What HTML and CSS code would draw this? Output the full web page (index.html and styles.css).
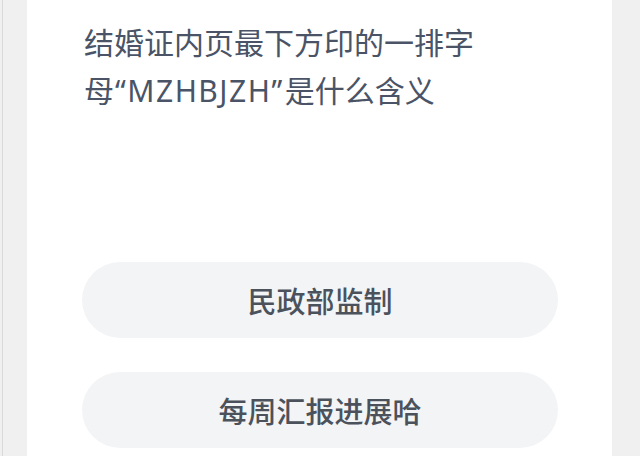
FILE: index.html
```html
<!DOCTYPE html>
<html lang="zh-CN">
<head>
  <meta charset="UTF-8">
  <meta name="viewport" content="width=device-width, initial-scale=1.0">
  <title>答题</title>
  <link rel="stylesheet" href="styles.css">
</head>
<body>
  <div class="page">
    <!-- 题目卡片 -->
    <div class="card">
      <h1 class="question">结婚证内页最下方印的一排字<br>母<span class="latin">“MZHBJZH”</span>是什么含义</h1>
      <div class="options">
        <button class="option">民政部监制</button>
        <button class="option">每周汇报进展哈</button>
      </div>
    </div>
  </div>
</body>
</html>
```

FILE: styles.css
```css
html, body {
  margin: 0;
  height: 100%;
}
body {
  font-family: "Noto Sans CJK SC", "Noto Sans", sans-serif;
  background: #f0f0f0;
  overflow: hidden;
}
.page {
  height: 100%;
  margin-left: 2px;
  border-left: 1px solid #d9d9d9;
  padding: 0 28px 0 24px;
}
.card {
  background: #ffffff;
  height: 100%;
  padding: 17px 54px 0 55px;
  box-sizing: border-box;
}
.question {
  margin: 0 0 0 2px;
  height: 96px;
  font-size: 30px;
  font-weight: normal;
  line-height: 48px;
  color: #4a5466;
}
.latin {
  font-family: "Noto Sans", sans-serif;
  letter-spacing: 1.5px;
  padding: 0 1px;
}
.options {
  display: flex;
  flex-direction: column;
  gap: 34px;
  margin-top: 149px;
}
.option {
  height: 76px;
  border: none;
  border-radius: 38px;
  background: #f3f4f6;
  color: #4b525c;
  font-family: inherit;
  font-size: 29px;
  font-weight: 500;
  cursor: pointer;
}
```
